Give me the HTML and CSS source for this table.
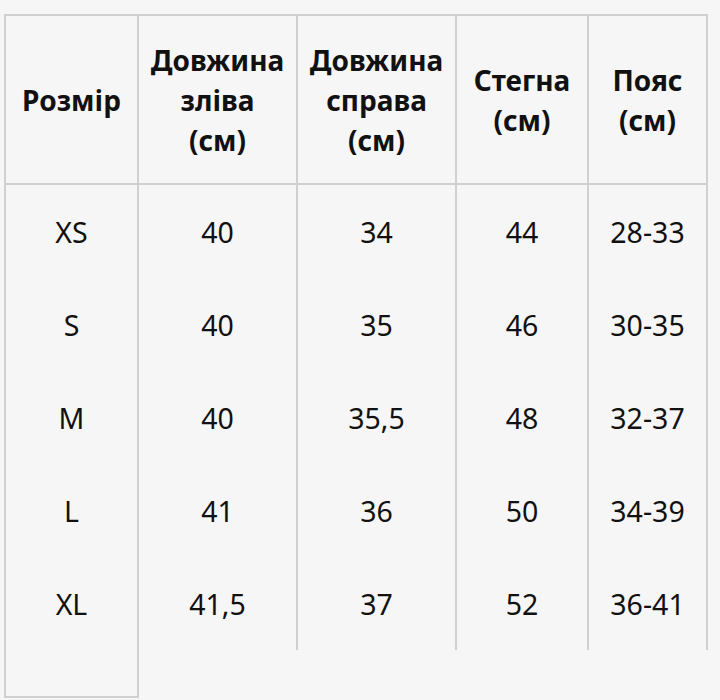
FILE: index.html
```html
<!DOCTYPE html>
<html lang="uk">
<head>
<meta charset="utf-8">
<link rel="stylesheet" href="styles.css">
</head>
<body>
<table class="sizes">
  <colgroup>
    <col class="c1"><col class="c2"><col class="c3"><col class="c4"><col class="c5">
  </colgroup>
  <thead>
    <tr>
      <th>Розмір</th>
      <th>Довжина<br>зліва<br>(см)</th>
      <th>Довжина<br>справа<br>(см)</th>
      <th>Стегна<br>(см)</th>
      <th>Пояс<br>(см)</th>
    </tr>
  </thead>
  <tbody>
    <tr><td>XS</td><td>40</td><td>34</td><td>44</td><td>28-33</td></tr>
    <tr><td>S</td><td>40</td><td>35</td><td>46</td><td>30-35</td></tr>
    <tr><td>M</td><td>40</td><td>35,5</td><td>48</td><td>32-37</td></tr>
    <tr><td>L</td><td>41</td><td>36</td><td>50</td><td>34-39</td></tr>
    <tr><td>XL</td><td>41,5</td><td>37</td><td>52</td><td>36-41</td></tr>
    <tr class="tail"><td></td><td></td><td></td><td></td><td></td></tr>
  </tbody>
</table>
</body>
</html>
```

FILE: styles.css
```css
html, body {
  margin: 0;
  padding: 0;
  background: #f6f6f6;
}
body {
  padding: 14px 0 0 4px;
  font-family: "Noto Sans", "Open Sans", sans-serif;
  color: #111;
}
.sizes {
  border-collapse: collapse;
  table-layout: fixed;
  width: 702px;
}
.c1 { width: 133px; }
.c2 { width: 159px; }
.c3 { width: 159px; }
.c4 { width: 132px; }
.c5 { width: 119px; }
.sizes th, .sizes td {
  border-left: 2px solid #d0d0d0;
  border-right: 2px solid #d0d0d0;
  padding: 0;
  text-align: center;
  vertical-align: middle;
}
.sizes th {
  height: 167px;
  font-size: 28px;
  line-height: 40px;
  font-weight: 700;
  border-top: 2px solid #d0d0d0;
  border-bottom: 2px solid #d0d0d0;
}
.sizes td {
  height: 93px;
  font-size: 28.5px;
  font-weight: 400;
}
.sizes .tail td {
  height: 46px;
  border: none;
}
.sizes .tail td:first-child {
  border-left: 2px solid #d0d0d0;
  border-right: 2px solid #d0d0d0;
  border-bottom: 2px solid #d0d0d0;
}
```
